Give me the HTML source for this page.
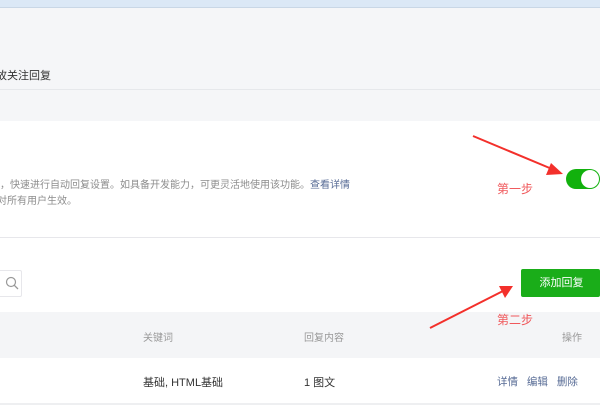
<!DOCTYPE html>
<html><head><meta charset="utf-8"><style>
*{margin:0;padding:0;box-sizing:border-box}
body{width:600px;height:405px;overflow:hidden;background:#fff;font-family:"Liberation Sans","Noto Sans CJK SC",sans-serif;position:relative}
.a{position:absolute}
</style></head><body>
<div class="a" style="left:0;top:0;width:600px;height:8px;background:#dbe8f6;border-bottom:1px solid #c9d7e6"></div>
<div class="a" style="left:0;top:8px;width:600px;height:113px;background:#f5f6f8"></div>
<div class="a" style="left:0;top:89px;width:600px;height:1px;background:#e6e8eb"></div>
<div class="a" style="left:0;top:67px;font-size:11px;color:#333;white-space:nowrap;margin-left:-4px">故关注回复</div>
<div class="a" style="left:0;top:176px;font-size:10px;color:#8d8d8d;white-space:nowrap">，快速进行自动回复设置。如具备开发能力，可更灵活地使用该功能。<span style="color:#576b95">查看详情</span></div>
<div class="a" style="left:0;top:192px;font-size:10px;color:#8d8d8d;white-space:nowrap;margin-left:-3px">对所有用户生效。</div>
<div class="a" style="left:566px;top:169px;width:34px;height:20px;border-radius:10px;background:#12b10d"></div>
<div class="a" style="left:581px;top:170px;width:18px;height:18px;border-radius:9px;background:#fff"></div>
<div class="a" style="left:497px;top:180px;font-size:12px;color:#f0595c">第一步</div>
<div class="a" style="left:0;top:237px;width:600px;height:1px;background:#e7e7eb"></div>
<div class="a" style="left:-5px;top:270px;width:27px;height:27px;border:1px solid #e7e7eb;border-radius:2px"></div>
<svg class="a" style="left:5px;top:276px" width="14" height="14"><circle cx="6" cy="6" r="4.5" stroke="#999" stroke-width="1.2" fill="none"/><line x1="9.3" y1="9.3" x2="13" y2="13" stroke="#999" stroke-width="1.3"/></svg>
<div class="a" style="left:521px;top:269px;width:79px;height:28px;background:#1aad19;border-radius:2px;color:#fff;font-size:11px;line-height:28px;text-align:center;padding-left:2px">添加回复</div>
<div class="a" style="left:0;top:312px;width:600px;height:46px;background:#f4f5f7"></div>
<div class="a" style="left:143px;top:329px;font-size:10px;color:#999">关键词</div>
<div class="a" style="left:304px;top:329px;font-size:10px;color:#999">回复内容</div>
<div class="a" style="left:562px;top:329px;font-size:10px;color:#999">操作</div>
<div class="a" style="left:497px;top:311px;font-size:12px;color:#f0595c">第二步</div>
<div class="a" style="left:143px;top:374px;font-size:11px;color:#333">基础, HTML基础</div>
<div class="a" style="left:304px;top:374px;font-size:11px;color:#333">1 图文</div>
<div class="a" style="left:497px;top:374px;font-size:10.5px;color:#576b95;word-spacing:6px">详情 编辑 删除</div>
<div class="a" style="left:0;top:403px;width:600px;height:2px;background:#eeeff1"></div>
<svg class="a" style="left:0;top:0" width="600" height="405">
<line x1="473" y1="136" x2="552" y2="169" stroke="#f3302b" stroke-width="2"/>
<polygon points="563,174 546,175 551,163" fill="#f3302b"/>
<line x1="430" y1="328" x2="503" y2="291" stroke="#f3302b" stroke-width="2"/>
<polygon points="513,286 505,298 499,286" fill="#f3302b"/>
</svg>
</body></html>
